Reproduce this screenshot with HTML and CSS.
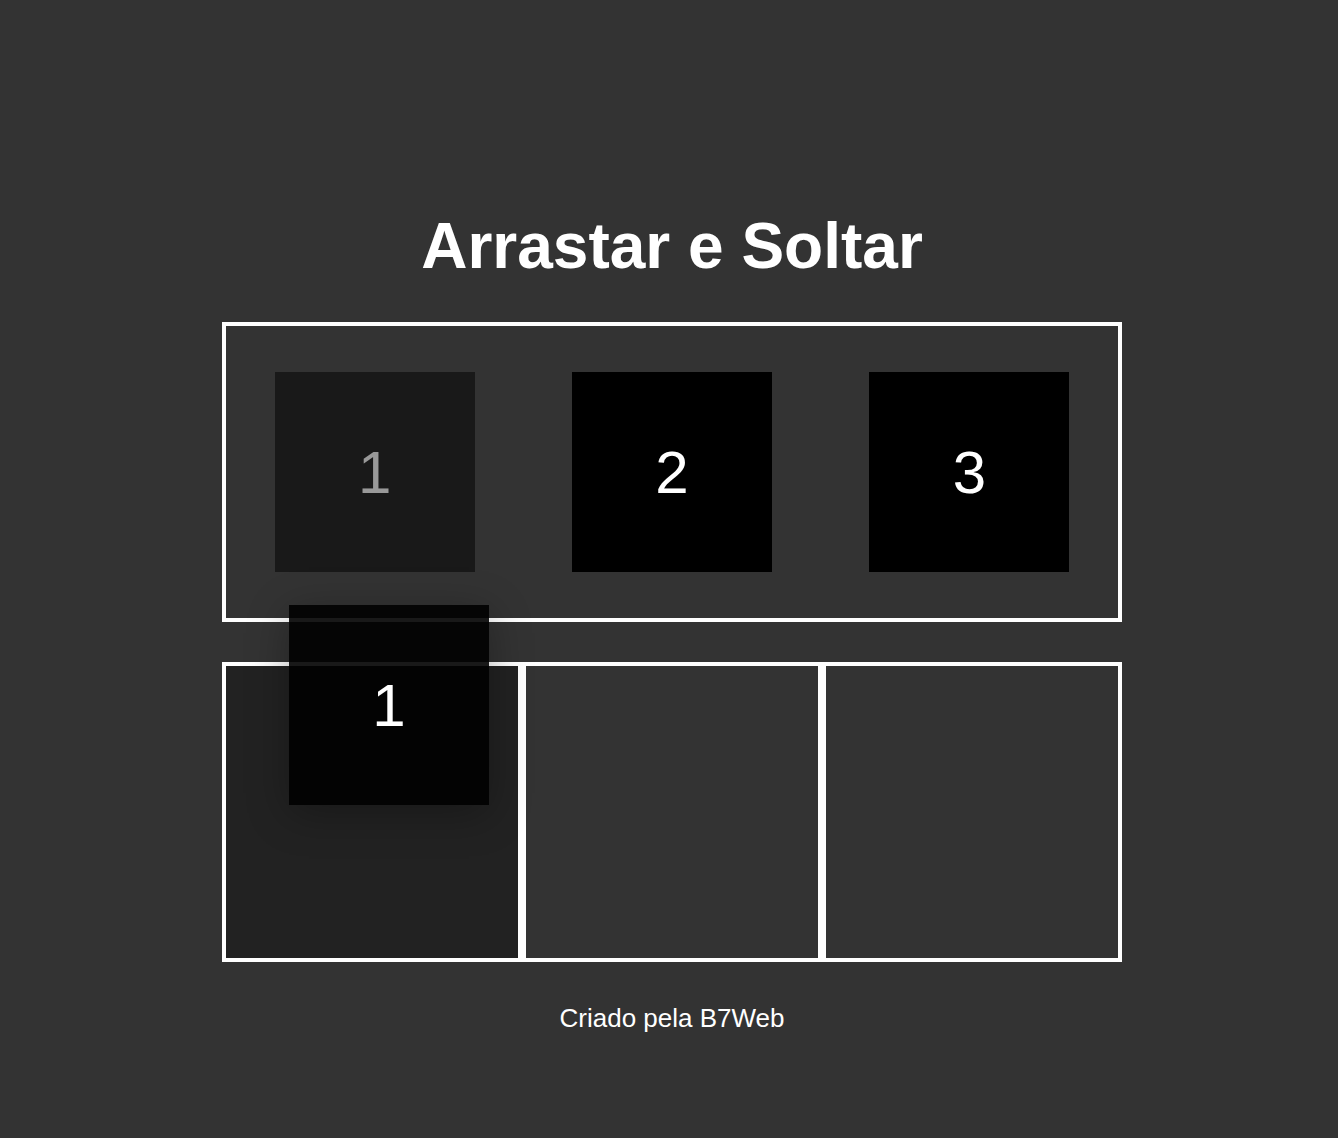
FILE: index.html
```html
<!DOCTYPE html>
<html lang="pt-BR">
<head>
<meta charset="utf-8">
<title>Arrastar e Soltar</title>
<link rel="stylesheet" href="styles.css">
</head>
<body>
<main class="page">
  <h1 class="title">Arrastar e Soltar</h1>
  <div class="neutral-area">
    <div class="item dragging">1</div>
    <div class="item">2</div>
    <div class="item">3</div>
  </div>
  <div class="areas">
    <div class="area hover"></div>
    <div class="area"></div>
    <div class="area"></div>
    <div class="drag-ghost">1</div>
  </div>
  <footer class="footer">Criado pela B7Web</footer>
</main>
</body>
</html>
```
FILE: styles.css
```css
html, body {
  margin: 0;
  padding: 0;
  background: #333333;
  color: #ffffff;
  font-family: "Liberation Sans", Arial, Helvetica, sans-serif;
}
body {
  padding-left: 6px;
}
.page {
  width: 900px;
  margin: 0 auto;
  padding-top: 200px;
  display: flex;
  flex-direction: column;
  align-items: center;
}
.title {
  margin: 0 0 30px 0;
  font-size: 64px;
  line-height: 92px;
  font-weight: bold;
  text-align: center;
}
.neutral-area {
  box-sizing: border-box;
  width: 900px;
  height: 300px;
  border: 4px solid #ffffff;
  display: flex;
  justify-content: space-around;
  align-items: center;
}
.item {
  width: 200px;
  height: 200px;
  background: #000000;
  color: #ffffff;
  font-size: 60px;
  display: flex;
  align-items: center;
  justify-content: center;
}
.item.dragging {
  opacity: 0.5;
}
.areas {
  position: relative;
  margin-top: 40px;
  display: flex;
  width: 900px;
}
.area {
  box-sizing: border-box;
  width: 300px;
  height: 300px;
  border: 4px solid #ffffff;
}
.area.hover {
  background: #222222;
}
.drag-ghost {
  position: absolute;
  left: 67px;
  top: -57px;
  width: 200px;
  height: 200px;
  background: rgba(0, 0, 0, 0.9);
  color: #ffffff;
  font-size: 60px;
  display: flex;
  align-items: center;
  justify-content: center;
  box-shadow: 0 8px 40px rgba(0, 0, 0, 0.3);
}
.footer {
  margin-top: 42px;
  font-size: 26px;
  line-height: 28px;
  text-align: center;
}
```
